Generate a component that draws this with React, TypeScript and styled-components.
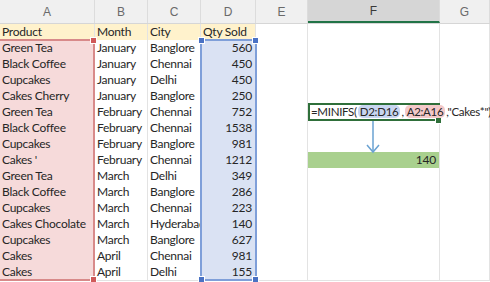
import React from "react";
import styled, { createGlobalStyle } from "styled-components";

const Global = createGlobalStyle`
  html, body { margin: 0; padding: 0; background: #fff; overflow: hidden; }
  body { font-family: "Lato", "Liberation Sans", sans-serif; }
`;

const COLS = [95, 53, 53, 55, 52, 132, 50];
const TEMPLATE = COLS.map((c) => `${c}px`).join(" ");

const Sheet = styled.div`
  position: relative;
  width: 490px;
  height: 282px;
  overflow: hidden;
`;

const HeaderRow = styled.div`
  display: grid;
  grid-template-columns: ${TEMPLATE};
  height: 24px;
  background: #f0f0f0;
  border-bottom: 1px solid #d6d6d6;
  box-sizing: border-box;
`;

const ColHead = styled.div<{ $active?: boolean }>`
  display: flex;
  align-items: center;
  justify-content: center;
  font-family: "Liberation Sans", Arial, sans-serif;
  font-size: 12px;
  color: ${(p) => (p.$active ? "#3a3a3a" : "#6a6a6a")};
  background: ${(p) => (p.$active ? "#d6d6d6" : "transparent")};
  border-right: 1px solid #dcdcdc;
  box-sizing: border-box;
  border-bottom: ${(p) => (p.$active ? "2px solid #217346" : "none")};
`;

const Row = styled.div`
  display: grid;
  grid-template-columns: ${TEMPLATE};
  height: 16px;
`;

type Tone = "none" | "head" | "red" | "blue" | "green";
const toneBg: Record<Tone, string> = {
  none: "#ffffff",
  head: "#fff2cc",
  red: "#f6dada",
  blue: "#dae2f3",
  green: "#a9d08e",
};

const Cell = styled.div<{ $tone: Tone; $right?: boolean }>`
  background: ${(p) => toneBg[p.$tone]};
  border-right: 1px solid #e3e3e3;
  border-bottom: 1px solid #e3e3e3;
  box-sizing: border-box;
  font-size: 12px;
  letter-spacing: -0.25px;
  line-height: 16px;
  color: #262626;
  white-space: nowrap;
  overflow: ${(p) => (p.$right ? "hidden" : "visible")};
  padding: 0 ${(p) => (p.$right ? "3px" : "2px")} 0 2px;
  text-align: ${(p) => (p.$right ? "right" : "left")};
  position: relative;
`;

const ClipCell = styled(Cell)`
  overflow: hidden;
`;

const Range = styled.div<{ $color: string }>`
  position: absolute;
  border: 2px solid ${(p) => p.$color};
  box-sizing: border-box;
  pointer-events: none;
`;

const Handle = styled.div<{ $color: string }>`
  position: absolute;
  width: 5px;
  height: 5px;
  background: ${(p) => p.$color};
  border: 1px solid #fff;
`;

const FormulaBox = styled.div`
  position: absolute;
  left: 308px;
  top: 103px;
  width: 132px;
  height: 18px;
  border: 2px solid #2f6f3a;
  box-sizing: border-box;
  background: #fff;
  display: flex;
  align-items: center;
  padding-left: 1px;
  font-size: 11.5px;
  letter-spacing: -0.3px;
  color: #262626;
  white-space: nowrap;
  overflow: visible;
`;

const Ref = styled.span<{ $bg: string }>`
  background: ${(p) => p.$bg};
  border-radius: 5px;
  padding: 0 2px;
  margin: 0 1px;
  line-height: 14px;
`;

const FormulaText = styled.span`
  position: relative;
  z-index: 1;
  padding-right: 2px;
`;

const Arrow = styled.svg`
  position: absolute;
  left: 364px;
  top: 121px;
`;

const data: [string, string, string, string][] = [
  ["Green Tea", "January", "Banglore", "560"],
  ["Black Coffee", "January", "Chennai", "450"],
  ["Cupcakes", "January", "Delhi", "450"],
  ["Cakes Cherry", "January", "Banglore", "250"],
  ["Green Tea", "February", "Chennai", "752"],
  ["Black Coffee", "February", "Chennai", "1538"],
  ["Cupcakes", "February", "Banglore", "981"],
  ["Cakes '", "February", "Chennai", "1212"],
  ["Green Tea", "March", "Delhi", "349"],
  ["Black Coffee", "March", "Banglore", "286"],
  ["Cupcakes", "March", "Chennai", "223"],
  ["Cakes Chocolate", "March", "Hyderabad", "140"],
  ["Cupcakes", "March", "Banglore", "627"],
  ["Cakes", "April", "Chennai", "981"],
  ["Cakes", "April", "Delhi", "155"],
];

const letters = ["A", "B", "C", "D", "E", "F", "G"];

export default function App() {
  return (
    <>
      <Global />
      <Sheet>
        <HeaderRow>
          {letters.map((l) => (
            <ColHead key={l} $active={l === "F"}>
              {l}
            </ColHead>
          ))}
        </HeaderRow>
        <Row>
          <Cell $tone="head">Product</Cell>
          <Cell $tone="head">Month</Cell>
          <Cell $tone="head">City</Cell>
          <Cell $tone="head">Qty Sold</Cell>
          <Cell $tone="none" />
          <Cell $tone="none" />
          <Cell $tone="none" />
        </Row>
        {data.map((r, i) => (
          <Row key={i}>
            <Cell $tone="red">{r[0]}</Cell>
            <Cell $tone="none">{r[1]}</Cell>
            <ClipCell $tone="none">{r[2]}</ClipCell>
            <Cell $tone="blue" $right>
              {r[3]}
            </Cell>
            <Cell $tone="none" />
            <Cell $tone={i === 7 ? "green" : "none"} $right>
              {i === 7 ? "140" : ""}
            </Cell>
            <Cell $tone="none" />
          </Row>
        ))}

        <Range $color="#d88a8a" style={{ left: -2, top: 39, width: 97, height: 242 }}>
          <Handle $color="#d05a5a" style={{ right: -4, top: -4 }} />
          <Handle $color="#d05a5a" style={{ right: -4, bottom: -4 }} />
        </Range>
        <Range $color="#7f9fd9" style={{ left: 200, top: 39, width: 57, height: 242 }}>
          <Handle $color="#4a72c4" style={{ left: -4, top: -4 }} />
          <Handle $color="#4a72c4" style={{ right: -4, top: -4 }} />
          <Handle $color="#4a72c4" style={{ left: -4, bottom: -4 }} />
          <Handle $color="#4a72c4" style={{ right: -4, bottom: -4 }} />
        </Range>

        <FormulaBox>
          <Handle $color="#2f6f3a" style={{ right: -4, bottom: -5 }} />
          <FormulaText>
            =MINIFS(<Ref $bg="#c8d5f0">D2:D16</Ref>,<Ref $bg="#f3c9c9">A2:A16</Ref>,"Cakes*")
          </FormulaText>
        </FormulaBox>

        <Arrow width="18" height="34" viewBox="0 0 18 34">
          <line x1="9" y1="0" x2="9" y2="30" stroke="#6aa2d2" strokeWidth="1.5" />
          <polyline points="3,24 9,31 15,24" fill="none" stroke="#6aa2d2" strokeWidth="1.5" />
        </Arrow>
      </Sheet>
    </>
  );
}
